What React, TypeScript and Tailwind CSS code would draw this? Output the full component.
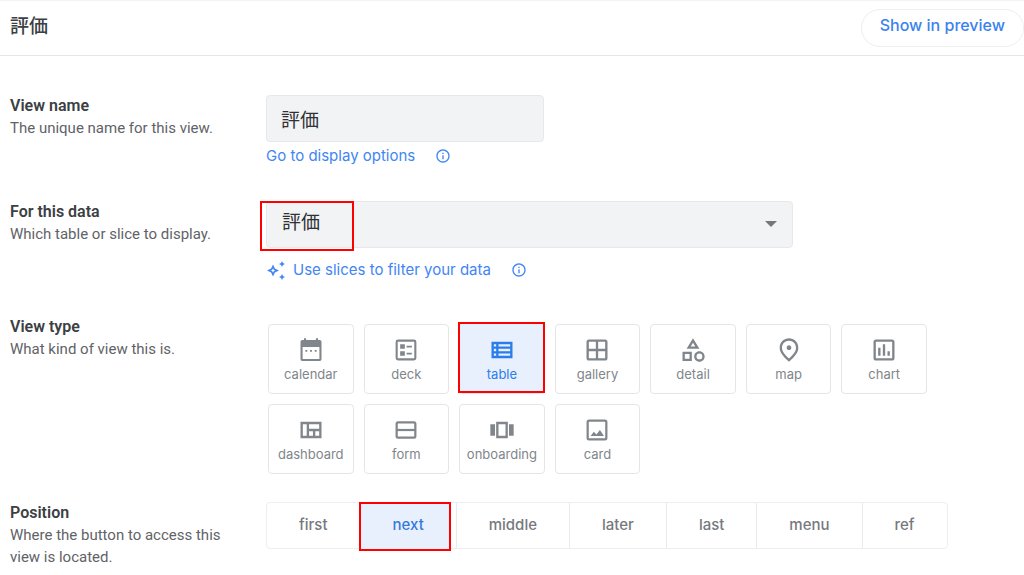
import { useState } from "react";
import type { ReactNode } from "react";
import {
  MdOutlineCategory,
  MdOutlineInfo,
  MdOutlineInsertChart,
  MdOutlinePlace,
  MdOutlineViewCarousel,
  MdOutlineViewQuilt,
  MdOutlineWindow,
} from "react-icons/md";

function CalendarIcon() {
  return (
    <svg viewBox="0 0 24 24" className="size-7" fill="currentColor" aria-hidden="true">
      <path d="M19.500 3.500H18V2h-1.800v1.500H7.800V2H6v1.500H4.500A1.500 1.500 0 0 0 3 5v15a1.500 1.500 0 0 0 1.500 1.500h15A1.500 1.500 0 0 0 21 20V5a1.500 1.500 0 0 0-1.500-1.500zm-.3 16.200H4.800V9.500h14.400z" />
      <path d="M7.200 12h1.600v1.500H7.200zm4 0h1.600v1.500h-1.600zm4 0h1.600v1.500h-1.600z" />
    </svg>
  );
}

function DeckIcon() {
  return (
    <svg viewBox="0 0 24 24" className="size-7" fill="none" stroke="currentColor" strokeWidth="1.800" aria-hidden="true">
      <rect x="4" y="4" width="16" height="16" rx="1.200" />
      <path d="M7 7h4v4H7zM7 13h4v4H7z" fill="currentColor" stroke="none" />
      <path d="M12.500 9h4.500M12.500 15h4.500" strokeWidth="1.500" />
    </svg>
  );
}

function TableIcon() {
  return (
    <svg viewBox="0 0 24 24" className="size-7" fill="none" stroke="currentColor" strokeWidth="2" aria-hidden="true">
      <path d="M4 6h16v12H4zM4 10h16M4 14h16M8 6v12" />
    </svg>
  );
}

function FormIcon() {
  return (
    <svg viewBox="0 0 24 24" className="size-7" fill="none" stroke="currentColor" strokeWidth="1.900" aria-hidden="true">
      <rect x="4" y="5.500" width="16" height="13" rx="1.200" />
      <path d="M4 12h16" />
    </svg>
  );
}

function CardIcon() {
  return (
    <svg viewBox="0 0 24 24" className="size-7" fill="none" stroke="currentColor" strokeWidth="1.900" aria-hidden="true">
      <rect x="4" y="4" width="16" height="16" rx="1.200" />
      <path d="M6.500 17.200l2.800-3.600 2.200 2.300 3-3.900 3.500 5.200z" fill="currentColor" stroke="none" />
    </svg>
  );
}

function SparkleIcon() {
  return (
    <svg viewBox="0 0 20 20" className="size-5" fill="currentColor" aria-hidden="true">
      <path
        fillRule="evenodd"
        d="M7 4.500l1.900 4.100L13 10.500l-4.100 1.900L7 16.500l-1.900-4.100L1 10.500l4.100-1.900zm0 4l-.7 1.300-1.300.7 1.300.7.7 1.300.7-1.300 1.300-.7-1.300-.7z"
      />
      <path d="M16 1l1 2 2 1-2 1-1 2-1-2-2-1 2-1zM16 14l1 2 2 1-2 1-1 2-1-2-2-1 2-1z" />
    </svg>
  );
}

const viewTypes: { name: string; icon: ReactNode }[] = [
  { name: "calendar", icon: <CalendarIcon /> },
  { name: "deck", icon: <DeckIcon /> },
  { name: "table", icon: <TableIcon /> },
  { name: "gallery", icon: <MdOutlineWindow className="size-7" /> },
  { name: "detail", icon: <MdOutlineCategory className="size-7" /> },
  { name: "map", icon: <MdOutlinePlace className="size-7" /> },
  { name: "chart", icon: <MdOutlineInsertChart className="size-7" /> },
  { name: "dashboard", icon: <MdOutlineViewQuilt className="size-7" /> },
  { name: "form", icon: <FormIcon /> },
  { name: "onboarding", icon: <MdOutlineViewCarousel className="size-7" /> },
  { name: "card", icon: <CardIcon /> },
];

const positions = ["first", "next", "middle", "later", "last", "menu", "ref"];

interface RowProps {
  title: string;
  hint: string;
  htmlFor?: string;
  children: ReactNode;
}

function Row({ title, hint, htmlFor, children }: RowProps) {
  const titleClass = "block text-base leading-[22px] font-semibold text-[#3c4043]";
  return (
    <div className="flex">
      <div className="w-[256px] shrink-0 pr-8">
        {htmlFor ? (
          <label htmlFor={htmlFor} className={titleClass}>
            {title}
          </label>
        ) : (
          <h2 className={titleClass}>{title}</h2>
        )}
        <p className="text-[15px] leading-[22px] text-[#5f6368]">{hint}</p>
      </div>
      <div className="min-w-0 flex-1">{children}</div>
    </div>
  );
}

export default function App() {
  const [name, setName] = useState("評価");
  const [viewType, setViewType] = useState("table");
  const [position, setPosition] = useState("next");

  return (
    <div className="bg-white font-[Roboto,'Noto_Sans_CJK_JP',sans-serif]">
      <header className="flex h-14 items-center justify-between border-t border-b border-t-[#f1f3f4] border-b-[#e4e6e8] pl-2.5">
        <h1 className="pb-0.5 text-[19px] font-medium text-[#3c4043]">評価</h1>
        <button className="h-[38px] rounded-full border border-[#eceef0] px-[18px] pb-1.5 font-[Inter,sans-serif] text-base font-medium text-[#3b82ec]">
          Show in preview
        </button>
      </header>

      <main className="flex flex-col pt-[39px] pl-2.5">
        <Row title="View name" hint="The unique name for this view." htmlFor="view-name">
          <input
            id="view-name"
            value={name}
            onChange={(e) => setName(e.target.value)}
            className="block h-[47px] w-full max-w-[278px] rounded border border-[#e6e8eb] bg-[#f1f3f4] px-3.5 text-[19px] text-[#303134]"
          />
          <div className="mt-1 flex items-center gap-5 text-[#4285f4]">
            <a href="#display" className="font-[Inter,sans-serif] text-[15px] leading-5">
              Go to display options
            </a>
            <MdOutlineInfo className="size-4" />
          </div>
        </Row>

        <div className="mt-[35px]">
          <Row title="For this data" hint="Which table or slice to display." htmlFor="source">
            <div className="relative max-w-[527px]">
              <select
                id="source"
                className="block h-[47px] w-full appearance-none rounded border border-[#e6e8eb] bg-[#f1f3f4] px-[15px] pb-0.5 text-[19px] text-[#303134]"
              >
                <option>評価</option>
              </select>
              <span className="pointer-events-none absolute top-5 right-4 border-x-[6px] border-t-[6px] border-x-transparent border-t-[#757779]" />
              <span className="pointer-events-none absolute top-0 -left-1.5 h-[50px] w-[94px] border-2 border-[#ff0000]" />
            </div>
            <div className="mt-3 flex items-center text-[#4285f4]">
              <SparkleIcon />
              <a href="#slices" className="mr-5 ml-[7px] font-[Inter,sans-serif] text-[15px] leading-5">
                Use slices to filter your data
              </a>
              <MdOutlineInfo className="size-4" />
            </div>
          </Row>
        </div>

        <div className="mt-9">
          <Row title="View type" hint="What kind of view this is.">
            <div className="grid max-w-[661px] grid-cols-7 gap-2.5 pt-2 pl-0.5">
              {viewTypes.map((v) => (
                <button
                  key={v.name}
                  aria-pressed={v.name === viewType}
                  onClick={() => setViewType(v.name)}
                  className={`relative isolate flex h-[70px] flex-col items-center rounded border border-[#e3e5e7] pt-[11px] font-[Inter,sans-serif] text-[13px] leading-5 ${
                    v.name === viewType ? "text-[#2b7de9]" : "text-[#80868b]"
                  }`}
                >
                  {v.name === viewType && (
                    <span className="absolute -top-[3px] -right-px bottom-0 -left-0.5 -z-10 border-2 border-[#ff0000] bg-[#e8f0fe]" />
                  )}
                  {v.icon}
                  {v.name}
                </button>
              ))}
            </div>
          </Row>
        </div>

        <div className="mt-7">
          <Row title="Position" hint="Where the button to access this view is located.">
            <div className="flex w-fit rounded border border-[#eceef0]">
              {positions.map((p) => (
                <button
                  key={p}
                  aria-pressed={p === position}
                  onClick={() => setPosition(p)}
                  className={`relative isolate h-[45px] border-r border-[#e8eaed] px-8 font-[Inter,sans-serif] text-[15px] font-medium last:border-r-0 ${
                    p === position ? "text-[#3578dd]" : "text-[#76797d]"
                  }`}
                >
                  {p === position && (
                    <span className="absolute -top-px right-[5px] -bottom-[3px] -left-0.5 -z-10 border-2 border-[#ff0000] bg-[#e8f0fe]" />
                  )}
                  {p}
                </button>
              ))}
            </div>
          </Row>
        </div>
      </main>
    </div>
  );
}
